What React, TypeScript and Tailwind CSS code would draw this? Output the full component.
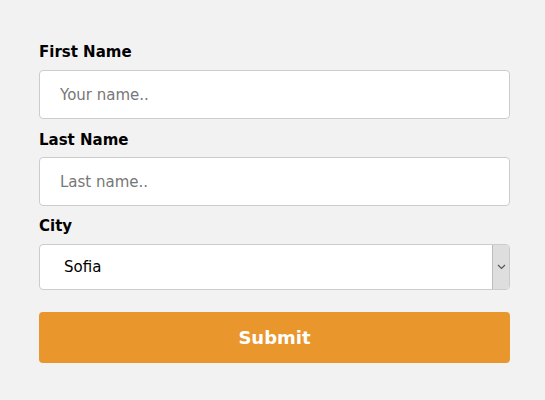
import React from 'react';

const font = { fontFamily: '"DejaVu Sans", Verdana, sans-serif' };

const App: React.FC = () => {
  return (
    <div className="w-[545px] h-[400px] bg-[#f2f2f2] px-[39px] pt-[42px]" style={font}>
      <form className="flex flex-col" onSubmit={(e) => e.preventDefault()}>
        <label className="text-[15px] font-bold text-black leading-[20px]">First Name</label>
        <input
          type="text"
          placeholder="Your name.."
          className="mt-[8px] h-[49px] w-[471px] rounded-[4px] border border-[#ccc] bg-white px-[20px] text-[15px] text-black placeholder:text-[#777] outline-none"
        />
        <label className="mt-[11px] text-[15px] font-bold text-black leading-[20px]">Last Name</label>
        <input
          type="text"
          placeholder="Last name.."
          className="mt-[7px] h-[49px] w-[471px] rounded-[4px] border border-[#ccc] bg-white px-[20px] text-[15px] text-black placeholder:text-[#777] outline-none"
        />
        <label className="mt-[10px] text-[15px] font-bold text-black leading-[20px]">City</label>
        <div className="mt-[8px] flex h-[46px] w-[471px] rounded-[4px] border border-[#ccc] bg-white">
          <div className="flex flex-1 items-center pl-[24px] text-[15px] text-black">Sofia</div>
          <div className="flex w-[17px] items-center justify-center border-l border-[#bbb] bg-[#dedede] rounded-r-[3px]">
            <svg width="9" height="6" viewBox="0 0 9 6">
              <path d="M1 1 L4.5 4.5 L8 1" fill="none" stroke="#555" strokeWidth="1.2" />
            </svg>
          </div>
        </div>
        <button
          type="submit"
          className="mt-[22px] h-[51px] w-[471px] rounded-[4px] bg-[#e9962d] text-[18px] font-bold text-white"
        >
          Submit
        </button>
      </form>
    </div>
  );
};

export default App;
